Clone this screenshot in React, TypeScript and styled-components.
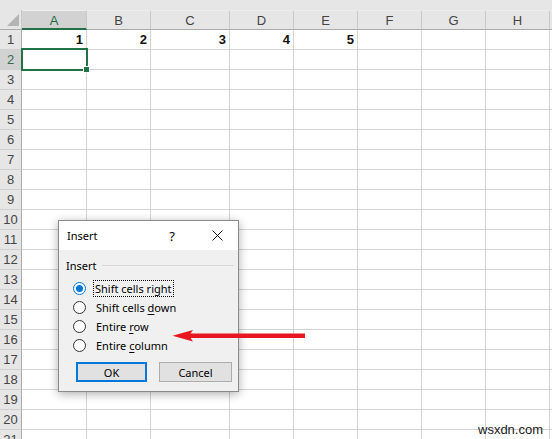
import React from "react";
import styled, { createGlobalStyle } from "styled-components";

const GlobalStyle = createGlobalStyle`
  html, body {
    margin: 0;
    padding: 0;
    background: #ffffff;
  }
  body {
    width: 552px;
    height: 439px;
    overflow: hidden;
  }
`;

// the last column only peeks in at the right edge, so it gets no label
const columns = [
  { name: "A", width: 65 },
  { name: "B", width: 64 },
  { name: "C", width: 79 },
  { name: "D", width: 64 },
  { name: "E", width: 64 },
  { name: "F", width: 64 },
  { name: "G", width: 64 },
  { name: "H", width: 64 },
  { name: "", width: 64 },
];

const rowCount = 21;
const firstRow = [1, 2, 3, 4, 5];

const options = [
  { before: "Shift cells r", key: "i", after: "ght", checked: true },
  { before: "Shift cells ", key: "d", after: "own", checked: false },
  { before: "Entire ", key: "r", after: "ow", checked: false },
  { before: "Entire ", key: "c", after: "olumn", checked: false },
];

export default function App() {
  const template = `22px ${columns.map((c) => `${c.width}px`).join(" ")}`;

  return (
    <Page>
      <GlobalStyle />
      <TopStrip />
      <Grid style={{ gridTemplateColumns: template }}>
        <Corner>
          <CornerTriangle />
        </Corner>
        {columns.map((c, i) => (
          <ColHeader key={i} $selected={c.name === "A"}>
            {c.name}
          </ColHeader>
        ))}
        {Array.from({ length: rowCount }).map((_, r) => (
          <React.Fragment key={r}>
            <RowHeader $selected={r === 1}>{r + 1}</RowHeader>
            {columns.map((c, ci) => (
              <Cell key={ci} $active={r === 1 && ci === 0}>
                {r === 0 && firstRow[ci] !== undefined ? firstRow[ci] : ""}
              </Cell>
            ))}
          </React.Fragment>
        ))}
      </Grid>

      <Dialog>
        <TitleBar>
          <Title>Insert</Title>
          <HelpButton>?</HelpButton>
          <CloseButton>
            <svg width="11" height="11" viewBox="0 0 11 11">
              <path d="M0.5 0.5 L10.5 10.5 M10.5 0.5 L0.5 10.5" stroke="#1a1a1a" strokeWidth="1" fill="none" />
            </svg>
          </CloseButton>
        </TitleBar>
        <DialogBody>
          <GroupLabel>
            <span>Insert</span>
            <GroupLine />
          </GroupLabel>
          <OptionList>
            {options.map((o) => (
              <OptionRow key={o.before + o.after}>
                <Radio $checked={o.checked} />
                <OptionText $focused={o.checked}>
                  {o.before}
                  {o.checked ? o.key : <u>{o.key}</u>}
                  {o.after}
                </OptionText>
              </OptionRow>
            ))}
          </OptionList>
          <ButtonRow>
            <DialogButton $primary>OK</DialogButton>
            <DialogButton>Cancel</DialogButton>
          </ButtonRow>
        </DialogBody>
      </Dialog>

      <Arrow width="134" height="14" viewBox="0 0 134 14">
        <rect x="16" y="4.5" width="117" height="4.5" fill="#e8161e" />
        <path d="M0.5 6.7 L21 1 L17 6.7 L21 12.4 Z" fill="#e8161e" />
      </Arrow>

      <Watermark>wsxdn.com</Watermark>
    </Page>
  );
}

const Page = styled.div`
  position: relative;
  width: 552px;
  height: 439px;
  overflow: hidden;
  background: #ffffff;
  font-family: "Liberation Sans", Arial, sans-serif;
`;

const TopStrip = styled.div`
  height: 10px;
  background: #e6e6e6;
`;

const Grid = styled.div`
  display: grid;
  grid-auto-rows: 20px;
`;

const Corner = styled.div`
  position: relative;
  background: #e6e6e6;
  border-right: 1px solid #c8c8c8;
  border-bottom: 1px solid #ababab;
  box-sizing: border-box;
`;

const CornerTriangle = styled.div`
  position: absolute;
  right: 2px;
  bottom: 3px;
  width: 0;
  height: 0;
  border-left: 12px solid transparent;
  border-bottom: 12px solid #b4b4b4;
`;

const ColHeader = styled.div<{ $selected?: boolean }>`
  display: flex;
  align-items: center;
  justify-content: center;
  box-sizing: border-box;
  background: ${(p) => (p.$selected ? "#d2d2d2" : "#e6e6e6")};
  color: ${(p) => (p.$selected ? "#1e6a40" : "#444444")};
  border-right: 1px solid #c8c8c8;
  border-bottom: ${(p) => (p.$selected ? "2px solid #217346" : "1px solid #ababab")};
  border-top: 1px solid #eeeeee;
  font-size: 13px;
  padding-top: 1px;
`;

const RowHeader = styled.div<{ $selected?: boolean }>`
  display: flex;
  align-items: center;
  justify-content: center;
  box-sizing: border-box;
  background: ${(p) => (p.$selected ? "#d2d2d2" : "#e6e6e6")};
  color: ${(p) => (p.$selected ? "#3a6a4e" : "#444444")};
  border-right: 1px solid #ababab;
  border-bottom: 1px solid #d0d0d0;
  font-size: 13px;
`;

const Cell = styled.div<{ $active?: boolean }>`
  position: relative;
  display: flex;
  align-items: center;
  justify-content: flex-end;
  box-sizing: border-box;
  padding-right: 3px;
  border-right: 1px solid #d4d4d4;
  border-bottom: 1px solid #d4d4d4;
  font-size: 13px;
  font-weight: bold;
  color: #111111;

  ${(p) =>
    p.$active &&
    `
    &::before {
      content: "";
      position: absolute;
      left: -1px;
      top: -2px;
      right: -2px;
      bottom: -2px;
      border: 2px solid #217346;
      z-index: 1;
    }
    &::after {
      content: "";
      position: absolute;
      right: -4px;
      bottom: -4px;
      width: 5px;
      height: 5px;
      background: #217346;
      border: 1px solid #ffffff;
      z-index: 2;
    }
  `}
`;

const Dialog = styled.div`
  position: absolute;
  left: 58px;
  top: 220px;
  width: 181px;
  height: 172px;
  box-sizing: border-box;
  border: 1px solid #8a8a8a;
  background: #f0f0f0;
  box-shadow: 0 2px 9px rgba(0, 0, 0, 0.32);
  font-family: "Segoe UI", "Noto Sans", sans-serif;
  font-size: 11px;
  color: #000000;
  display: flex;
  flex-direction: column;
`;

const TitleBar = styled.div`
  height: 29px;
  background: #ffffff;
  display: flex;
  align-items: center;
  padding-left: 8px;
  padding-right: 6px;
`;

const Title = styled.div`
  flex: 1;
  font-size: 11px;
`;

const HelpButton = styled.div`
  width: 30px;
  text-align: center;
  font-size: 13px;
  margin-right: 15px;
`;

const CloseButton = styled.div`
  width: 30px;
  display: flex;
  justify-content: center;
  align-items: center;
`;

const DialogBody = styled.div`
  flex: 1;
  display: flex;
  flex-direction: column;
  padding: 7px 4px 0 7px;
`;

const GroupLabel = styled.div`
  display: flex;
  align-items: center;
  height: 16px;
  gap: 5px;
`;

const GroupLine = styled.div`
  flex: 1;
  height: 1px;
  background: #d9d9d9;
`;

const OptionList = styled.div`
  display: flex;
  flex-direction: column;
  margin-top: 6px;
  padding-left: 7px;
`;

const OptionRow = styled.div`
  height: 19px;
  display: flex;
  align-items: center;
  gap: 8px;
`;

const Radio = styled.span<{ $checked?: boolean }>`
  position: relative;
  width: 13px;
  height: 13px;
  box-sizing: border-box;
  border-radius: 50%;
  background: #ffffff;
  border: 1px solid ${(p) => (p.$checked ? "#0078d7" : "#333333")};

  ${(p) =>
    p.$checked &&
    `
    &::after {
      content: "";
      position: absolute;
      left: 2px;
      top: 2px;
      width: 7px;
      height: 7px;
      border-radius: 50%;
      background: #0078d7;
    }
  `}
`;

const OptionText = styled.span<{ $focused?: boolean }>`
  line-height: 15px;
  padding: 0 1px;
  outline: ${(p) => (p.$focused ? "1px dotted #000000" : "none")};
  margin-left: ${(p) => (p.$focused ? "0" : "1px")};

  u {
    text-underline-offset: 2px;
  }
`;

const ButtonRow = styled.div`
  display: flex;
  gap: 12px;
  margin-top: 7px;
  padding-left: 10px;
`;

const DialogButton = styled.div<{ $primary?: boolean }>`
  width: ${(p) => (p.$primary ? "71px" : "73px")};
  height: 20px;
  box-sizing: border-box;
  display: flex;
  align-items: center;
  justify-content: center;
  background: #e1e1e1;
  border: ${(p) => (p.$primary ? "2px solid #0078d7" : "1px solid #adadad")};
  font-size: 11px;
`;

const Arrow = styled.svg`
  position: absolute;
  left: 172px;
  top: 329px;
`;

const Watermark = styled.div`
  position: absolute;
  left: 478px;
  top: 422px;
  font-family: "Liberation Sans", Arial, sans-serif;
  font-size: 13px;
  color: #222222;
`;
